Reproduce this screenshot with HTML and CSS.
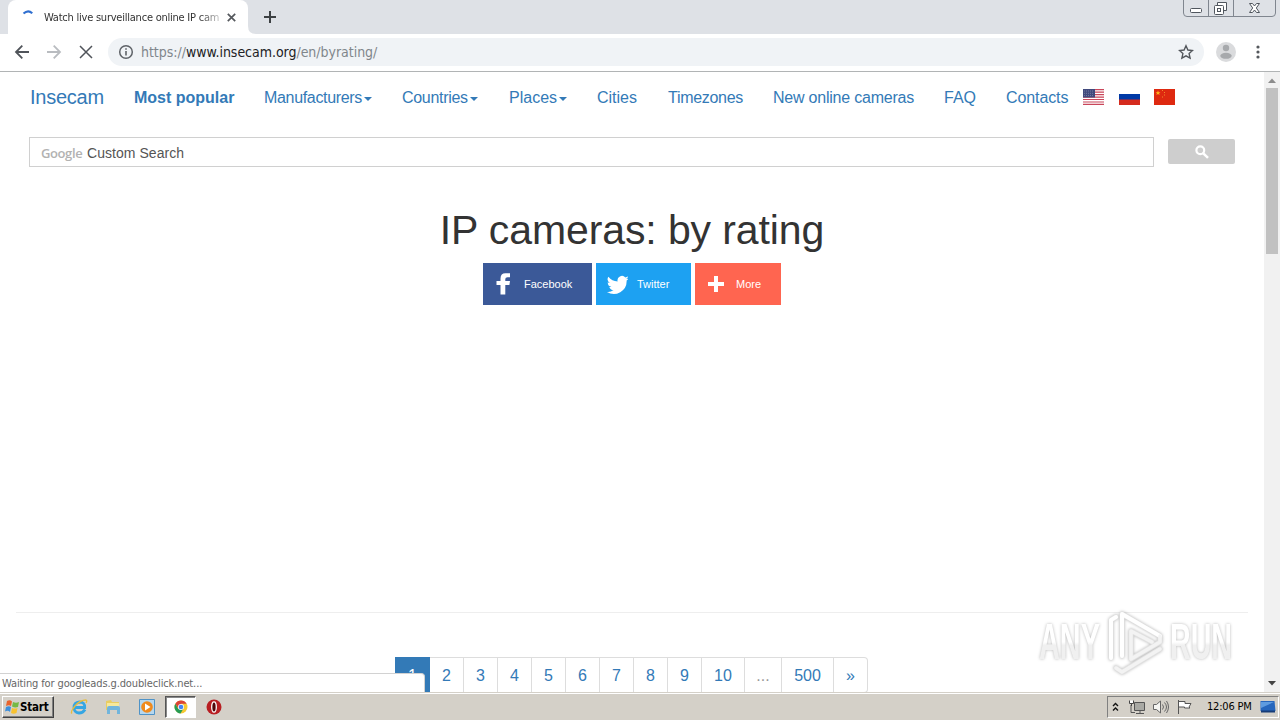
FILE: index.html
```html
<!DOCTYPE html>
<html lang="en">
<head>
<meta charset="utf-8">
<title>Watch live surveillance online IP cameras</title>
<link rel="stylesheet" href="styles.css">
</head>
<body>
<div class="screen">
  <header class="tabstrip">
    <div class="tab">
      <svg class="spinner" width="16" height="16" viewBox="0 0 16 16"><path d="M3.500 4.600Q8 .4 12.300 4.200" fill="none" stroke="#2f6fd0" stroke-width="2"/></svg>
      <span class="tab-title">Watch live surveillance online IP cam</span>
      <svg class="tab-close" width="9" height="9" viewBox="0 0 9 9"><path d="M.8.8l7.400 7.400M8.200.8L.8 8.200" stroke="#55585d" stroke-width="1.700"/></svg>
    </div>
    <svg class="tab-curve" width="8" height="8"><path d="M0 0v8h8Q0 8 0 0" fill="#fff"/></svg>
    <svg class="newtab" width="12" height="12"><path d="M6 0v12M0 6h12" stroke="#3c4043" stroke-width="2"/></svg>
    <svg class="window-buttons" width="94" height="18" viewBox="0 0 94 18" fill="none" stroke="#80868f">
      <path d="M.5 0v13Q.5 16.500 4 16.500H89Q92.500 16.500 92.500 13V0M25.500 0v16M50.500 0v16"/>
      <rect x="7.500" y="8.500" width="11" height="4" rx="1" fill="#fff" stroke="#50565e"/>
      <path d="M34.500 5V2.500h9v8H41" fill="#fff" stroke="#50565e"/>
      <rect x="31.500" y="5.500" width="9" height="9" rx="1" fill="#fff" stroke="#50565e"/><rect x="34.500" y="8.500" width="3" height="3" stroke="#50565e"/>
      <path d="M66.500 3.500h3l2 2.500 2-2.500h3l-3.200 4.500 3.200 4.500h-3l-2-2.500-2 2.500h-3l3.200-4.500z" fill="#fff" stroke="#50565e"/>
    </svg>
  </header>
  <div class="toolbar">
    <svg class="nav-icons" width="84" height="16" viewBox="0 0 84 16" fill="none" stroke-width="1.800">
      <path d="M15 8H2M8.300 1.700L2 8l6.300 6.300" stroke="#50545a"/>
      <path d="M33 8h13M39.700 1.700L46 8l-6.300 6.300" stroke="#b9bcc0"/>
      <path d="M66 2l12 12M78 2L66 14" stroke="#50545a" stroke-width="1.500"/>
    </svg>
    <div class="omnibox">
      <svg width="16" height="16" viewBox="0 0 16 16"><circle cx="8" cy="8" r="6.300" fill="none" stroke="#5f6368" stroke-width="1.500"/><path d="M8 7v4.500M8 4.300v1.500" stroke="#5f6368" stroke-width="1.600"/></svg>
      <span class="url">https://<b>www.insecam.org</b>/en/byrating/</span>
      <svg class="star" width="16" height="16" viewBox="0 0 16 16"><path d="M8 1.800l1.900 4.200 4.600.5-3.400 3.100 1 4.600L8 11.800l-4.100 2.400 1-4.600L1.500 6.500 6.100 6z" fill="none" stroke="#53575c" stroke-width="1.400"/></svg>
    </div>
    <svg class="avatar" width="20" height="20" viewBox="0 0 20 20"><circle cx="10" cy="10" r="10" fill="#dadbdd"/><circle cx="10" cy="6" r="3.200" fill="#a7a9ac"/><ellipse cx="10" cy="13.800" rx="5.700" ry="3" fill="#a7a9ac"/></svg>
    <svg class="menu-dots" width="4" height="14" fill="#55585d"><circle cx="2" cy="2" r="1.600"/><circle cx="2" cy="7" r="1.600"/><circle cx="2" cy="12" r="1.600"/></svg>
  </div>
  <div class="viewport">
    <main class="page">
      <nav class="navbar">
        <a class="brand">Insecam</a>
        <a class="popular">Most popular</a>
        <a class="manufacturers">Manufacturers<i class="caret"></i></a>
        <a class="countries">Countries<i class="caret"></i></a>
        <a class="places">Places<i class="caret"></i></a>
        <a class="cities">Cities</a>
        <a class="timezones">Timezones</a>
        <a class="new-cameras">New online cameras</a>
        <a class="faq">FAQ</a>
        <a class="contacts">Contacts</a>
        <div class="flags">
          <svg width="21" height="16" viewBox="0 0 21 16"><path fill="#fff" d="M0 0h21v16H0z"/><path d="M0 .6h21M0 3.100h21M0 5.600h21M0 8.100h21M0 10.500h21M0 13h21M0 15.400h21" stroke="#c9465a" stroke-width="1.200"/><path fill="#414a7d" d="M0 0h12v8.500H0z"/><path d="M1 2h10M1 4.300h10M1 6.600h10" stroke="#8389ab" stroke-dasharray="1 1" stroke-width=".8"/></svg>
          <svg width="21" height="16" viewBox="0 0 21 16"><path fill="#fff" d="M0 0h21v5H0z"/><path fill="#0039a6" d="M0 5h21v6H0z"/><path fill="#d52b1e" d="M0 10.500h21V16H0z"/></svg>
          <svg width="21" height="16" viewBox="0 0 21 16"><path fill="#de2910" d="M0 0h21v16H0z"/><path fill="#ffb51b" d="M4 1.500l.7 1.700h1.800L5.100 4.300l.5 1.800L4 5 2.400 6.100l.5-1.800-1.400-1.100h1.800z"/><path d="M8 1.500h1M10 3.500h1M10 6h1M8 8h1" stroke="#f3892c"/></svg>
        </div>
      </nav>
      <div class="search">
        <div class="search-box"><span class="google">Google</span><span>Custom Search</span></div>
        <div class="search-button"><svg width="14" height="14" viewBox="0 0 14 14" fill="none" stroke="#fff"><circle cx="5.300" cy="5.300" r="3.900" stroke-width="2.200"/><path d="M8.300 8.300l4.700 4.500" stroke-width="2.500"/></svg></div>
      </div>
      <h1>IP cameras: by rating</h1>
      <div class="share">
        <a class="facebook"><svg width="22" height="24" viewBox="0 0 22 24"><path fill="#fff" d="M7.500 22.500V13H3.500V9h4V6.500Q7.500 1.300 12.500 1.300H17v4h-2.500Q12.300 5.300 12.300 7v2H17l-.6 4h-4.100v9.500z"/></svg><span>Facebook</span></a>
        <a class="twitter"><svg width="22" height="24" viewBox="-1 0 24 24"><path fill="#fff" d="M23.900 5.600a9.800 9.800 0 0 1-2.800.8 4.900 4.900 0 0 0 2.100-2.700 9.700 9.700 0 0 1-3.100 1.200 4.900 4.900 0 0 0-8.400 4.500A14 14 0 0 1 1.600 4.200a4.900 4.900 0 0 0 1.500 6.600 4.900 4.900 0 0 1-2.200-.6 4.900 4.900 0 0 0 3.900 4.900 4.900 4.900 0 0 1-2.200.1 4.900 4.900 0 0 0 4.600 3.400A9.900 9.900 0 0 1 0 20.600 14 14 0 0 0 21.500 8.100a10 10 0 0 0 2.400-2.500z"/></svg><span>Twitter</span></a>
        <a class="more"><svg width="22" height="24" viewBox="0 0 22 24"><path d="M11 4v16M3 12h16" stroke="#fff" stroke-width="4"/></svg><span>More</span></a>
      </div>
      <hr>
      <div class="pagination">
        <a class="active">1</a><a>2</a><a>3</a><a>4</a><a>5</a><a>6</a><a>7</a><a>8</a><a>9</a><a class="ten">10</a><a class="dots">...</a><a class="last">500</a><a class="next">»</a>
      </div>
    </main>
    <aside class="scrollbar">
      <svg width="16" height="16"><path d="M4 11h8L8 6.500z" fill="#8c8c8c"/></svg>
      <div class="thumb"></div>
      <svg class="down" width="16" height="16"><path d="M4 5h8L8 9.500z" fill="#444"/></svg>
    </aside>
    <div class="status"><span>Waiting for googleads.g.doubleclick.net...</span></div>
    <svg class="watermark" width="248" height="80" viewBox="0 0 248 80">
      <defs><linearGradient id="fade" x1="0" y1="0" x2="0" y2="1"><stop offset=".5" stop-color="#fff"/><stop offset=".56" stop-color="#f0f0f0"/></linearGradient></defs>
      <g fill="url(#fade)" font-size="50" font-weight="700">
        <text x="7" y="55" textLength="61" lengthAdjust="spacingAndGlyphs">ANY</text>
        <text x="138" y="55" textLength="62" lengthAdjust="spacingAndGlyphs">RUN</text>
      </g>
      <g fill="none" stroke-linejoin="round" stroke-linecap="round">
        <path d="M79 54V16l5-3M84 64l6 4 38-23M90 52V10l38 22v6L99 55V27l21 11" stroke="#e2e2e2" stroke-width="5"/>
        <path d="M79 54V16l5-3M90 52V10l38 22" stroke="#fff" stroke-width="4"/>
        <path d="M84 64l6 4 38-23M128 32v6L99 55V27l21 11" stroke="#f3f3f3" stroke-width="3.500"/>
      </g>
    </svg>
  </div>
  <footer class="taskbar">
    <div class="start"><svg width="16" height="16" viewBox="0 0 16 16"><path fill="#e9642c" d="M3 2Q6 .5 8 2.500L7 7Q5 5.500 2 7z"/><path fill="#76b943" d="M9 3q3 1.500 6 0l-1 5q-3 1-6-.5z"/><path fill="#3d8fdb" d="M2 8q3-1.500 5 0l-1 5q-2-2-5-.5z"/><path fill="#f8c22f" d="M8 9q3 1 5.500 0l-1 5Q9.500 15.500 7 14z"/></svg><span>Start</span></div>
    <div class="quick">
      <svg width="18" height="18" viewBox="0 0 18 18"><path d="M15 11.500Q13 15 9 15 4 14.500 4 9.500T9.500 4Q15 4 14.700 9.500H5" fill="none" stroke="#35a6e3" stroke-width="2.800"/><path d="M2 15.500Q0 14 5 8T16 2q1.500.5 0 3" fill="none" stroke="#e7bc3c" stroke-width="1.300"/></svg>
      <svg width="18" height="18" viewBox="0 0 18 18"><path d="M2 3l5-1 1 2h7v8H2z" fill="#e9cd62"/><path d="M3 5h12v7H3z" fill="#f7e89b"/><path d="M3 16v-6q0-2 2-2h9q2 0 2 2v6h-3v-4H6v4z" fill="#72b5dc"/></svg>
      <svg width="18" height="18" viewBox="0 0 18 18"><path d="M1.500 1.500h15v15h-15z" fill="#b6d7ee" stroke="#4f93c7"/><circle cx="9" cy="9" r="5.800" fill="#f08a1c"/><path d="M7 5.500v7L12.500 9z" fill="#fff"/></svg>
      <div class="task-active"><svg width="14" height="14" viewBox="0 0 14 14"><circle cx="7" cy="7" r="6.500" fill="#f6c932"/><path d="M1.300 3.800A6.500 6.500 0 0 1 12.700 3.800H7L4.500 8.500z" fill="#db4437"/><path d="M1.300 3.800L4.300 9 9.500 8.500 6.500 13.500A6.500 6.500 0 0 1 1.300 3.800" fill="#269b55"/><circle cx="7" cy="7" r="3" fill="#fff"/><circle cx="7" cy="7" r="2.300" fill="#4285f4"/></svg></div>
      <svg class="opera" width="16" height="16" viewBox="0 0 16 16"><circle cx="8" cy="8" r="7.500" fill="#b81e22"/><ellipse cx="8" cy="8" rx="2.300" ry="5.200" fill="#50070a" stroke="#fff" stroke-width="1.300"/></svg>
    </div>
    <div class="tray">
      <svg class="chevrons" width="7" height="10" fill="none" stroke="#111" stroke-width="1.400"><path d="M1 4l2.500-2.500L6 4M1 8.500L3.500 6 6 8.500"/></svg>
      <svg width="18" height="16" viewBox="0 0 18 16"><path d="M5.500 3.500h10v8h-10z" fill="#a9a9a4" stroke="#555"/><path d="M7 14.500h8M11 12v2M2 6v7.500h4" stroke="#555" fill="none"/><path d="M.5 1.500v3h4v-3M2.500 4v3" stroke="#444" fill="#fff"/></svg>
      <svg width="18" height="16" viewBox="0 0 18 16" fill="none" stroke="#666"><path d="M.5 5.500h3L7.500 2v12l-4-3.500h-3z" fill="#f5f5f2"/><path d="M9.500 5.500q2 2.500 0 5M11.500 3.500q4 4.500 0 9M13.500 2q4 6 0 12"/></svg>
      <svg width="18" height="16" viewBox="0 0 18 16"><path d="M1.500 1v14M2 2.500h6v2h6l-2 3.500 1 1H7.500V8H2" fill="#fff" stroke="#555"/></svg>
      <span class="clock">12:06 PM</span>
      <svg class="desktop" width="16" height="14" viewBox="0 0 16 14"><path d="M.5 1h14l1 10H.5z" fill="#2767bd"/><path d="M1 2h13L1 8z" fill="#5f9ce0"/><path d="M1 11.500h14" stroke="#173c77" stroke-width="2"/></svg>
    </div>
  </footer>
</div>
</body>
</html>
```
FILE: styles.css
```css
* { box-sizing: border-box; }
body { margin: 0; }
svg { display: block; flex: none; }
.screen { width: 1280px; height: 720px; overflow: hidden; display: flex; flex-direction: column; background: #fff; font-family: "Liberation Sans", Arial, sans-serif; }
.tabstrip { height: 34px; background: #dee1e6; display: flex; flex: none; padding-left: 8px; }
.tab { width: 240px; height: 34px; background: #fff; border-radius: 8px 8px 0 0; display: flex; align-items: center; padding-left: 12px; }
.spinner { margin-top: -1px; }
.tab-title { width: 176px; margin-left: 8px; font: 11px "DejaVu Sans Condensed", Tahoma, sans-serif; letter-spacing: -.23px; white-space: nowrap; overflow: hidden; color: #333; -webkit-mask-image: linear-gradient(90deg, #000 88%, rgba(0,0,0,.25)); }
.tab-close { margin-left: 7px; }
.tab-curve { align-self: flex-end; }
.newtab { margin: 11px 0 0 8px; }
.window-buttons { margin: 0 3px 0 auto; }
.toolbar { height: 38px; flex: none; display: flex; align-items: center; padding: 0 20px 2px 14px; border-bottom: 1px solid #b1b4b5; }
.omnibox { width: 1096px; height: 28px; margin-left: 10px; padding: 0 10px; border-radius: 14px; background: #f0f3f6; display: flex; align-items: center; }
.url { margin-left: 7px; font: 14px "DejaVu Sans Condensed", Tahoma, sans-serif; letter-spacing: -.03px; color: #80868b; white-space: nowrap; }
.url b { font-weight: 400; color: #202124; }
.star { margin-left: auto; }
.avatar { margin-left: 12px; }
.menu-dots { margin-left: auto; }
.viewport { height: 620px; flex: none; display: flex; position: relative; overflow: hidden; }
.page { width: 1264px; }
.navbar { display: flex; height: 50px; padding: 1px 0 0 15px; font-size: 16px; color: #337ab7; align-items: center; white-space: nowrap; }
.navbar a { padding: 0 0 0 15px; flex: none; display: flex; align-items: center; }
.navbar .brand { font-size: 20px; width: 104px; letter-spacing: -.25px; }
.navbar .popular { font-weight: 700; width: 130px; }
.manufacturers { width: 138px; letter-spacing: -.33px; }
.countries { width: 107px; letter-spacing: -.3px; }
.places { width: 88px; }
.cities { width: 71px; }
.timezones { width: 105px; letter-spacing: -.3px; }
.new-cameras { width: 171px; letter-spacing: -.22px; }
.faq { width: 62px; }
.contacts { width: 92px; letter-spacing: -.1px; }
.caret { border: 4px solid transparent; border-top-color: #337ab7; border-bottom: 0; margin: 3px 0 0 2px; }
.flags { display: flex; gap: 14.500px; margin-bottom: 2px; }
.search { display: flex; align-items: center; height: 30px; margin: 15px 0 0 29px; }
.search-box { width: 1125px; height: 30px; border: 1px solid #d0d0d0; display: flex; align-items: center; padding: 2px 0 0 11px; font-size: 14px; letter-spacing: .05px; color: #555; }
.google { width: 46px; color: #b2b2b2; font: 600 13px "Open Sans", sans-serif; letter-spacing: -.4px; }
.search-button { width: 67px; height: 25px; margin: -1px 0 0 14px; background: #cecece; border-radius: 2px; display: flex; align-items: center; justify-content: center; }
h1 { margin: 40px 0 0; height: 46px; line-height: 46px; font-size: 41px; font-weight: 400; letter-spacing: -.1px; color: #333; text-align: center; }
.share { display: flex; justify-content: center; gap: 4px; height: 42px; margin-top: 10px; }
.share a { display: flex; align-items: center; padding-left: 10px; color: #fff; font-size: 11px; }
.share span { margin-left: 9px; }
.facebook { width: 109px; background: #3b5998; }
.twitter { width: 95px; background: #1da1f2; }
.more { width: 86px; background: #ff6550; }
hr { margin: 307px 16px 0; border: 0; border-top: 1px solid #eee; }
.pagination { display: flex; margin: 44px 0 0 395px; height: 36px; width: 473px; font-size: 16px; color: #337ab7; border: 1px solid #ddd; border-left: 0; border-radius: 4px; }
.pagination a { width: 34px; flex: none; display: flex; align-items: center; justify-content: center; padding-top: 2px; border-right: 1px solid #ddd; }
.pagination .active { width: 35px; margin-top: -1px; color: #fff; background: #337ab7; border: 0; }
.pagination .ten { width: 43px; }
.pagination .dots { width: 37px; color: #999; }
.pagination .last { width: 52px; }
.pagination .next { width: 33px; border: 0; }
.scrollbar { width: 16px; background: #f1f1f1; display: flex; flex-direction: column; }
.thumb { width: 12px; height: 166px; background: #c1c1c1; margin-left: 2px; }
.down { margin-top: auto; }
.status { position: absolute; left: 0; bottom: 0; width: 425px; height: 19px; border: 1px solid #d2d2d2; border-width: 1px 1px 0 0; border-radius: 0 4px 0 0; background: #fff; padding: 3px 0 0 2px; font: 11px/14px "DejaVu Sans Condensed", Tahoma, sans-serif; letter-spacing: -.12px; color: #666; white-space: nowrap; }
.watermark { position: absolute; left: 1032px; top: 532px; filter: drop-shadow(0 0 1.500px rgba(0,0,0,.28)); }
.taskbar { height: 28px; background: #d4d0c8; border-top: 1px solid #d4d0c8; box-shadow: inset 0 1px #fff; display: flex; align-items: center; padding: 0 1px 0 2px; }
.start { width: 52px; height: 22px; border: 1px solid; border-color: #fff #404040 #404040 #fff; box-shadow: inset -1px -1px #808080; display: flex; align-items: center; padding-left: 1px; font: 700 11.500px "DejaVu Sans Condensed", Tahoma, sans-serif; letter-spacing: -.2px; }
.quick { display: flex; align-items: center; margin-left: 16px; gap: 16px; }
.task-active { width: 31px; height: 22px; margin-left: -7px; background: #fff; border: 1px solid; border-color: #555 #fff #fff #555; box-shadow: inset 1px 1px #888; display: flex; align-items: center; justify-content: center; }
.opera { margin-left: -6px; }
.tray { width: 172px; height: 22px; margin-left: auto; border: 1px solid; border-color: #808080 #fff #fff #808080; display: flex; align-items: center; padding-left: 4px; gap: 6px; }
.chevrons { margin-right: 4px; }
.clock { margin-left: 6px; font: 11px "DejaVu Sans Condensed", Tahoma, sans-serif; letter-spacing: -.2px; white-space: nowrap; }
.desktop { margin-left: auto; margin-right: 2px; }
```
